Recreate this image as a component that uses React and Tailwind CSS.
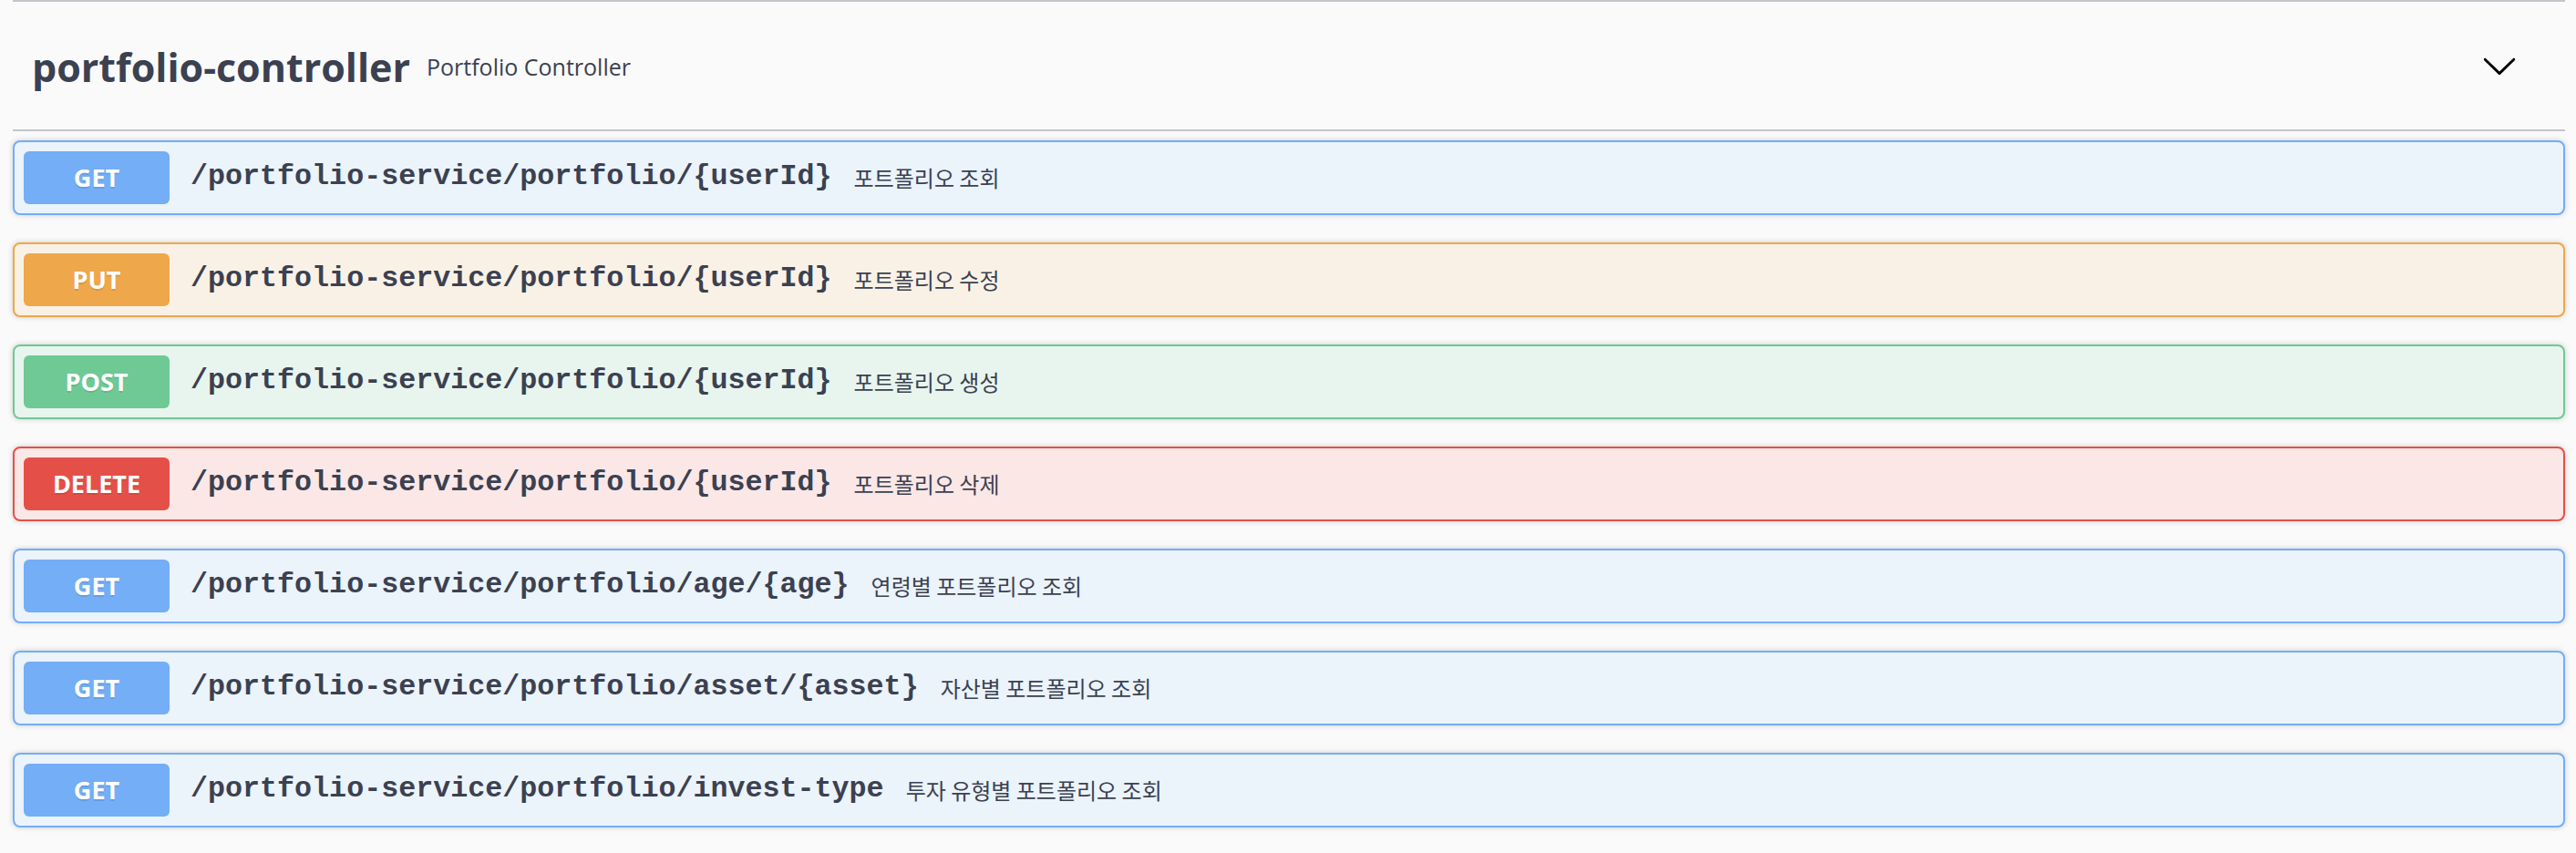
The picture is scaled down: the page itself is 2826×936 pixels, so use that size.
const methodStyles = {
  GET: {
    box: "border-[#73aef6] bg-[#ebf3fb]",
    badge: "bg-[#73aef6]",
  },
  PUT: {
    box: "border-[#eea74b] bg-[#faf1e6]",
    badge: "bg-[#eea74b]",
  },
  POST: {
    box: "border-[#6fc995] bg-[#e8f5ee]",
    badge: "bg-[#6fc995]",
  },
  DELETE: {
    box: "border-[#e45048] bg-[#fae7e6]",
    badge: "bg-[#e45048]",
  },
};

const operations = [
  { method: "GET", path: "/portfolio-service/portfolio/{userId}", summary: "포트폴리오 조회" },
  { method: "PUT", path: "/portfolio-service/portfolio/{userId}", summary: "포트폴리오 수정" },
  { method: "POST", path: "/portfolio-service/portfolio/{userId}", summary: "포트폴리오 생성" },
  { method: "DELETE", path: "/portfolio-service/portfolio/{userId}", summary: "포트폴리오 삭제" },
  { method: "GET", path: "/portfolio-service/portfolio/age/{age}", summary: "연령별 포트폴리오 조회" },
  { method: "GET", path: "/portfolio-service/portfolio/asset/{asset}", summary: "자산별 포트폴리오 조회" },
  { method: "GET", path: "/portfolio-service/portfolio/invest-type", summary: "투자 유형별 포트폴리오 조회" },
];

function Operation({ method, path, summary }) {
  const style = methodStyles[method];

  return (
    <div
      className={`mb-[30px] flex h-[82px] items-center rounded-[8px] border-2 px-[10px] shadow-[0_0_6px_rgba(0,0,0,0.19)] ${style.box}`}
    >
      <div
        className={`flex h-[58px] w-[160px] shrink-0 items-center justify-center rounded-[6px] text-[27px] font-bold text-white [font-family:'Open_Sans',sans-serif] [text-shadow:0_2px_0_rgba(0,0,0,0.1)] ${style.badge}`}
      >
        {method}
      </div>
      <span className="ml-[23px] whitespace-nowrap text-[31.7px] font-bold text-[#3b4151] [font-family:'Liberation_Mono',monospace]">
        {path}
      </span>
      <span className="ml-[24px] whitespace-nowrap text-[24px] text-[#3b4151] [font-family:'Noto_Sans_CJK_KR',sans-serif]">
        {summary}
      </span>
    </div>
  );
}

export default function App() {
  return (
    <div className="min-h-screen bg-[#fafafa] pl-[14px] pr-[12px]">
      <div className="h-[2px] bg-[#c4c5ca]" />
      <div className="flex h-[142px] items-center border-b-2 border-[#c4c5ca] pl-[21px] pt-[4px]">
        <h3 className="whitespace-nowrap text-[43px] font-bold text-[#3b4151] [font-family:'Open_Sans',sans-serif]">
          portfolio-controller
        </h3>
        <small className="ml-[18px] flex-1 whitespace-nowrap text-[25px] text-[#3b4151] [font-family:'Open_Sans',sans-serif]">
          Portfolio Controller
        </small>
        <svg
          className="mr-[52px] -mt-[4px] h-[40px] w-[40px] shrink-0"
          viewBox="0 0 20 20"
          fill="#000"
        >
          <path d="M17.418 6.109c.272-.268.709-.268.979 0s.271.701 0 .969l-7.908 7.83c-.27.268-.707.268-.979 0l-7.908-7.83c-.27-.268-.27-.701 0-.969.271-.268.709-.268.979 0L10 13.25l7.418-7.141z" />
        </svg>
      </div>
      <div className="pt-[10px]">
        {operations.map((operation, i) => (
          <Operation key={i} {...operation} />
        ))}
      </div>
    </div>
  );
}
